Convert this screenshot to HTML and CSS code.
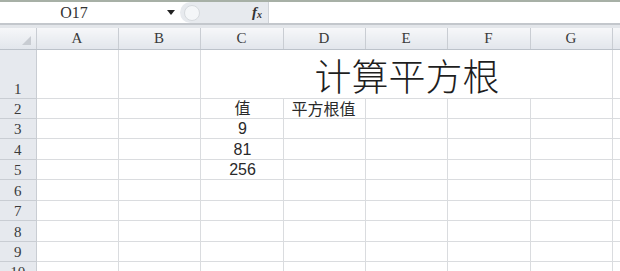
FILE: index.html
```html
<!DOCTYPE html>
<html lang="zh-CN">
<head>
    <meta charset="UTF-8">
    <title>计算平方根</title>
    <link rel="stylesheet" href="styles.css">
</head>
<body>
    <div class="formula-bar">
        <div class="name-box">O17</div>
        <div class="drop">
            <svg width="8" height="5" viewBox="0 0 8 5"><path d="M0 0H8L4 5Z" fill="#222"/></svg>
        </div>
        <div class="fx-area">
            <span class="grip"></span>
            <span class="fx">f<sub>x</sub></span>
        </div>
        <div class="formula"></div>
    </div>
    <div class="gap"></div>
    <table class="sheet">
        <colgroup>
            <col class="w-rh">
            <col class="w82"><col class="w82"><col class="w83"><col class="w82">
            <col class="w82"><col class="w83"><col class="w82"><col class="w-rest">
        </colgroup>
        <tr class="head">
            <th class="corner"><span class="tri"></span></th>
            <th>A</th><th>B</th><th>C</th><th>D</th><th>E</th><th>F</th><th>G</th><th></th>
        </tr>
        <tr class="h49">
            <th>1</th><td></td><td></td>
            <td colspan="5" class="title">计算平方根</td><td></td>
        </tr>
        <tr class="h20">
            <th>2</th><td></td><td></td><td class="mid">值</td><td class="zh">平方根值</td><td></td><td></td><td></td><td></td>
        </tr>
        <tr class="h20">
            <th>3</th><td></td><td></td><td class="mid">9</td><td></td><td></td><td></td><td></td><td></td>
        </tr>
        <tr class="h21">
            <th>4</th><td></td><td></td><td class="mid">81</td><td></td><td></td><td></td><td></td><td></td>
        </tr>
        <tr class="h20">
            <th>5</th><td></td><td></td><td class="mid">256</td><td></td><td></td><td></td><td></td><td></td>
        </tr>
        <tr class="h21">
            <th>6</th><td></td><td></td><td></td><td></td><td></td><td></td><td></td><td></td>
        </tr>
        <tr class="h20">
            <th>7</th><td></td><td></td><td></td><td></td><td></td><td></td><td></td><td></td>
        </tr>
        <tr class="h21">
            <th>8</th><td></td><td></td><td></td><td></td><td></td><td></td><td></td><td></td>
        </tr>
        <tr class="h20">
            <th>9</th><td></td><td></td><td></td><td></td><td></td><td></td><td></td><td></td>
        </tr>
        <tr class="h20">
            <th>10</th><td></td><td></td><td></td><td></td><td></td><td></td><td></td><td></td>
        </tr>
    </table>
</body>
</html>
```

FILE: styles.css
```css
body {
    margin: 0;
    width: 620px;
    height: 271px;
    overflow: hidden;
    background: #fff;
    font: 16px "Liberation Sans", "Noto Sans CJK SC", sans-serif;
    color: #2a2a2a;
}
.formula-bar {
    height: 21px;
    display: flex;
    border-top: 2px solid #a7b0a6;
    border-bottom: 2px solid #c3c7cc;
    background: #fff;
}
.name-box {
    width: 162px;
    text-align: center;
    font: 16px/21px "Liberation Serif", serif;
    color: #333;
    box-sizing: border-box;
    padding-right: 14px;
}
.drop {
    width: 18px;
    display: flex;
    align-items: center;
    justify-content: center;
}
.fx-area {
    width: 88px;
    display: flex;
    align-items: center;
    justify-content: space-between;
    background: #e7eaee;
    border-radius: 11px 0 0 11px;
    padding: 0 6px 0 4px;
    box-sizing: border-box;
}
.grip {
    width: 14px;
    height: 14px;
    border-radius: 50%;
    background: #f4f6f8;
    border: 1px solid #d6dade;
}
.fx {
    font: italic bold 15px "Liberation Serif", serif;
    color: #333;
}
.fx sub {
    font-size: 10px;
    vertical-align: -1px;
}
.formula {
    flex: 1;
    border-left: 1px solid #cfd3d8;
}
.gap {
    height: 3px;
    background: #e3e6ea;
}
.sheet {
    border-collapse: collapse;
    table-layout: fixed;
    width: 620px;
}
.w-rh { width: 36px; }
.w82 { width: 82px; }
.w83 { width: 83px; }
.w-rest { width: 8px; }
.sheet th,
.sheet td {
    padding: 0;
    border: 1px solid #dadcdf;
    box-sizing: border-box;
    overflow: hidden;
    white-space: nowrap;
}
.sheet th {
    font: 15px "Liberation Serif", serif;
    color: #3a3a3a;
    font-weight: normal;
    background: #e6e9ee;
    border-color: #c9cdd3;
    text-align: center;
    vertical-align: bottom;
}
.sheet tr:first-child td,
.sheet tr:first-child th {
    border-top: none;
}
.sheet td:first-child,
.sheet th:first-child {
    border-left: none;
}
.head th {
    height: 21px;
    background: linear-gradient(#f6f7f9, #e2e6ec);
    border-bottom-color: #bcc2ca;
    vertical-align: middle;
}
.corner {
    position: relative;
}
.tri {
    position: absolute;
    right: 5px;
    bottom: 4px;
    width: 0;
    height: 0;
    border-left: 9px solid transparent;
    border-bottom: 9px solid #c8ccd2;
}
.h49 { height: 49px; }
.h20 { height: 20px; }
.h21 { height: 21px; }
.sheet .title {
    font: 300 37px/42px "Noto Sans CJK SC", sans-serif;
    text-align: center;
    vertical-align: bottom;
    padding: 0 0 2px 2px;
    color: #1e1e1e;
}
.sheet .mid {
    text-align: center;
    vertical-align: bottom;
    line-height: 19px;
    padding-left: 2px;
}
.sheet .zh {
    font-family: "Noto Sans CJK SC", sans-serif;
    vertical-align: bottom;
    line-height: 19px;
    padding-left: 8px;
    overflow: visible;
}
```
